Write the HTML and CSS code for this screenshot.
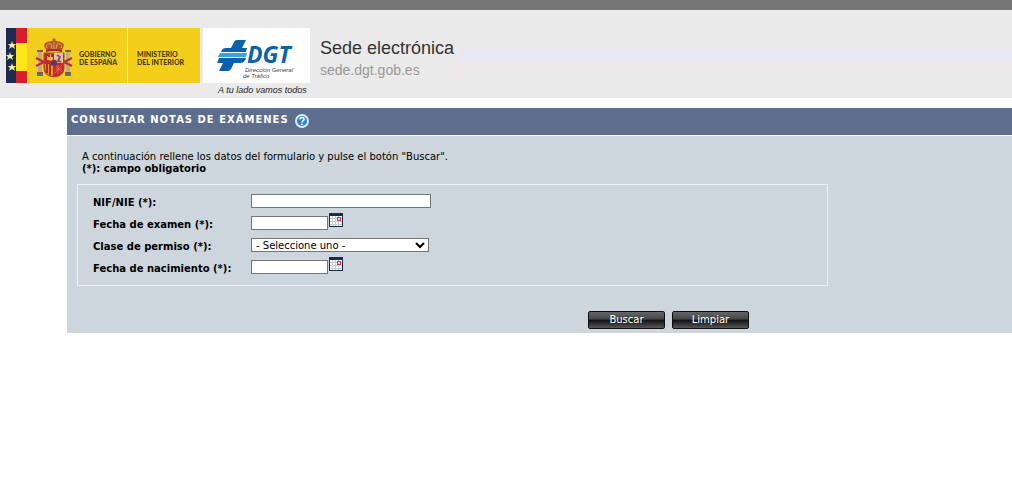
FILE: index.html
```html
<!DOCTYPE html>
<html lang="es">
<head>
    <meta charset="UTF-8">
    <meta name="viewport" content="width=device-width, initial-scale=1.0">
    <title>Consultar notas de exámenes</title>
    <link rel="stylesheet" href="styles.css">
</head>
<body>
    <header class="site-header">
        <div class="gov-logo">
            <div class="flags">
                <svg width="21" height="55" viewBox="0 0 21 55">
                    <rect width="21" height="55" fill="#d81e2c"/>
                    <rect x="10" y="15" width="11" height="28" fill="#fde617"/>
                    <rect width="10" height="55" fill="#1c2c50"/>
                    <g fill="#f6ee9a">
                        <path id="star" d="M6 13l1 3h3l-2 2 1 3-3-2-3 2 1-3-2-2h3z"/>
                        <use href="#star" x="-2" y="11"/>
                        <use href="#star" y="22"/>
                    </g>
                </svg>
            </div>
            <div class="gov-block gov-country">
                <svg width="38" height="40" viewBox="0 0 38 40">
                    <!-- crown -->
                    <path d="M10 10C7 5 12 3 19 3s12 2 9 7l-2 3H12z" fill="#b5552c"/>
                    <path d="M12 10C10 6 14 5 16 6l1 5M26 10c2-4-2-5-4-4l-1 5M19 4v7" fill="none" stroke="#e3a548"/>
                    <path d="M19 0v4M17 2h4" stroke="#8d4a24"/>
                    <path d="M11 12q8-2 16 0v2q-8-2-16 0z" fill="#a8282c"/>
                    <!-- columns -->
                    <path d="M5 14v20M33 14v20" stroke="#b9ad90" stroke-width="4"/>
                    <path d="M2 13h6M30 13h6M2 35h6M30 35h6" stroke="#8a5a2a" stroke-width="2"/>
                    <path d="M1 20l8 4M1 28l8-4M37 20l-8 4M37 28l-8-4" stroke="#c22a30" stroke-width="2"/>
                    <path d="M2 37h6M30 37h6" stroke="#53728f" stroke-width="2"/>
                    <!-- shield -->
                    <path d="M9 15h20v15q0 8-10 9-10-1-10-9z" fill="#c9252d" stroke="#a34a30"/>
                    <path d="M19 15h9v10h-9z" fill="#dfc4ad"/>
                    <path d="M12 22v-4h1v1h2v-3h1v3h2v4z" fill="#edbd38"/>
                    <path d="M22 17l3 2-2 4 3 1" fill="none" stroke="#a34862" stroke-width="2"/>
                    <path d="M10 26h8v12q-8-1-8-8z" fill="#df9c2c"/>
                    <path d="M12 26v9M15 26v11" stroke="#b8282d" stroke-width="2"/>
                    <path d="M20 27l7 7M27 27l-7 8M23 27v9M20 31h7" stroke="#d86b42"/>
                    <circle cx="19" cy="25" r="3" fill="#294a83" stroke="#b52530"/>
                </svg>
                <span>GOBIERNO<br>DE ESPAÑA</span>
            </div>
            <div class="gov-block gov-ministry">
                <span>MINISTERIO<br>DEL INTERIOR</span>
            </div>
        </div>
        <div class="dgt-logo">
            <div class="dgt-box">
                <svg width="107" height="55" viewBox="0 0 107 55">
                    <path d="M34 12h9l-4 8h5l-1 4H18q1-4 5-4h5l3-6q1-2 3-2z" fill="#0b62a8"/>
                    <path d="M17 25h27l-1 4H15z" fill="#35a5dc"/>
                    <path d="M16 30h27q-1 5-6 5h-6l-3 6q-1 2-3 2h-9l4-8h-6z" fill="#0b62a8"/>
                    <text class="dgt-name" x="44" y="35">DGT</text>
                    <text class="dgt-sub" x="42" y="44">Dirección General</text>
                    <text class="dgt-sub" x="40" y="50">de Tráfico</text>
                </svg>
            </div>
            <div class="tagline">A tu lado vamos todos</div>
        </div>
        <div class="site-title">
            <div class="site-name">Sede electrónica</div>
            <div class="site-url">sede.dgt.gob.es</div>
        </div>
        <div class="header-fill"></div>
    </header>

    <main class="panel">
        <div class="panel-title">
            <h1>CONSULTAR NOTAS DE EXÁMENES</h1>
            <svg width="14" height="14" viewBox="0 0 14 14">
                <circle cx="7" cy="7" r="6" fill="#2f83d1" stroke="#dceaf6" stroke-width="2"/>
                <path d="M5 5.500q0-2 2-2t2 1.700q0 1-1 1.600T7 8.500M7 9.500V11" fill="none" stroke="#fff" stroke-width="1.500"/>
            </svg>
        </div>
        <form class="panel-body">
            <div class="intro">
                <p>A continuación rellene los datos del formulario y pulse el botón "Buscar".</p>
                <p><b>(*): campo obligatorio</b></p>
            </div>
            <div class="fields">
                <div class="field">
                    <label for="nif">NIF/NIE (*):</label>
                    <input type="text" id="nif" class="input-long">
                </div>
                <div class="field">
                    <label for="fechaExamen">Fecha de examen (*):</label>
                    <input type="text" id="fechaExamen" class="input-date">
                    <svg class="calendar" width="14" height="14" viewBox="0 0 14 14">
                        <rect width="14" height="14" fill="#1c2a4a"/>
                        <rect x="1" y="3" width="12" height="10" fill="#fff"/>
                        <path d="M3.500 3v10M6.500 3v10M9.500 3v10M1 5.500h12M1 8.500h12M1 11.500h12" stroke="#c9cbd4"/>
                        <rect x="8.500" y="4.500" width="3" height="3" fill="#fff" stroke="#e0303c"/>
                    </svg>
                </div>
                <div class="field">
                    <label for="clase">Clase de permiso (*):</label>
                    <select id="clase">
                        <option>- Seleccione uno -</option>
                    </select>
                </div>
                <div class="field">
                    <label for="fechaNacimiento">Fecha de nacimiento (*):</label>
                    <input type="text" id="fechaNacimiento" class="input-date">
                    <svg class="calendar" width="14" height="14" viewBox="0 0 14 14">
                        <rect width="14" height="14" fill="#1c2a4a"/>
                        <rect x="1" y="3" width="12" height="10" fill="#fff"/>
                        <path d="M3.500 3v10M6.500 3v10M9.500 3v10M1 5.500h12M1 8.500h12M1 11.500h12" stroke="#c9cbd4"/>
                        <rect x="8.500" y="4.500" width="3" height="3" fill="#fff" stroke="#e0303c"/>
                    </svg>
                </div>
            </div>
            <div class="buttons">
                <button type="submit">Buscar</button>
                <button type="reset">Limpiar</button>
            </div>
        </form>
    </main>
</body>
</html>
```

FILE: styles.css
```css
body {
    margin: 0;
    background-color: #fff;
    color: #000;
    font-family: Verdana, "DejaVu Sans", sans-serif;
    font-size: 10px;
    line-height: 12px;
}

svg {
    display: block;
    flex-shrink: 0;
}

/* Header */
.site-header {
    display: flex;
    align-items: flex-start;
    height: 70px;
    padding: 18px 0 0 6px;
    border-top: 10px solid #777;
    background-color: #eaeaea;
}

.gov-logo {
    display: flex;
    height: 55px;
    margin-right: 3px;
    font-family: Lato, sans-serif;
    font-size: 7px;
    font-weight: 900;
    line-height: 8px;
    color: #4b3d16;
    white-space: nowrap;
}

.gov-block {
    display: flex;
    align-items: center;
    box-sizing: border-box;
    padding-top: 4px;
    background-color: #f3cf1b;
}

.gov-country {
    gap: 6px;
    width: 101px;
    padding-left: 8px;
    border-right: 1px solid #fbf0b0;
}

.gov-ministry {
    width: 72px;
    padding-left: 9px;
}

.dgt-box {
    width: 107px;
    background-color: #fff;
}

.dgt-name {
    font: italic bold 23px "Noto Sans", sans-serif;
    fill: #0b62a8;
}

.dgt-sub {
    font: italic 6px "Liberation Sans", Arial, sans-serif;
    fill: #444;
}

.tagline {
    padding: 2px 0 0 15px;
    font: italic 9px/11px "Liberation Sans", Arial, sans-serif;
    color: #222;
    white-space: nowrap;
}

.site-title {
    padding: 9px 4px 0 10px;
    font-family: "Liberation Sans", Arial, sans-serif;
    white-space: nowrap;
}

.site-name {
    font-size: 18px;
    line-height: 22px;
    color: #333;
}

.site-url {
    font-size: 14px;
    line-height: 22px;
    color: #999;
}

.header-fill {
    flex: 1;
    height: 55px;
    background: linear-gradient(#eaeaea 18px, #ece6ec 20px, #e8e8f2 26px, #e8e8f2 32px, #f0e6e8 36px, #eae8ec 44px, #eaeaea 50px);
}

/* Query panel */
.panel {
    margin: 10px 0 0 67px;
}

.panel-title {
    display: flex;
    gap: 6px;
    box-sizing: border-box;
    height: 28px;
    padding: 6px 4px 0;
    border-bottom: 1px solid #fff;
    background-color: #5d6d8d;
    color: #fff;
}

.panel-title h1 {
    margin: 0;
    font-size: 10px;
    line-height: 12px;
    letter-spacing: 1px;
}

.panel-body {
    padding: 15px 10px 4px;
    background-color: #ced6dd;
}

.intro {
    padding-left: 5px;
    margin-bottom: 9px;
}

.intro p {
    margin: 0;
}

.fields {
    box-sizing: border-box;
    max-width: 751px;
    padding: 5px 15px 7px;
    border: 1px solid #eef1f4;
}

.field {
    display: flex;
    align-items: center;
    min-height: 22px;
}

.field label {
    width: 158px;
    padding-top: 3px;
    font-weight: bold;
}

input,
select {
    box-sizing: border-box;
    height: 14px;
    padding: 0;
    border: 1px solid #767676;
    border-radius: 0;
    background-color: #fff;
    color: #000;
    font: inherit;
}

.input-long {
    width: 180px;
}

.input-date {
    width: 77px;
}

select {
    width: 178px;
}

.calendar {
    margin: 0 0 6px 1px;
}

.buttons {
    display: flex;
    justify-content: flex-end;
    gap: 7px;
    max-width: 672px;
    margin-top: 25px;
}

button {
    width: 77px;
    height: 18px;
    padding: 0;
    border: 1px solid #111;
    border-radius: 2px;
    background: linear-gradient(#666 0%, #444 45%, #111 50%, #555 100%);
    color: #fff;
    font: inherit;
    cursor: pointer;
}
```
